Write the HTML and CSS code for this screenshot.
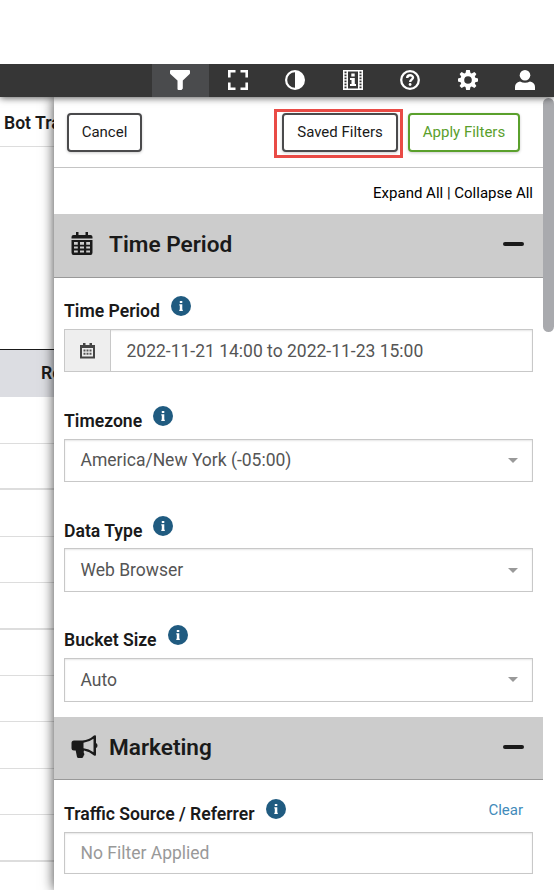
FILE: index.html
```html
<!DOCTYPE html>
<html lang="en">
<head>
    <meta charset="UTF-8">
    <meta name="viewport" content="width=device-width, initial-scale=1.0">
    <title>Filters</title>
    <link rel="stylesheet" href="styles.css">
</head>
<body>
    <nav class="topbar">
        <a class="topbar-item active">
            <svg width="20" height="20" viewBox="0 0 20 20"><path fill="#fff" d="M1 0h18q1 0 1 1v2q0 .7-.6 1.2L12.800 10.500V18.500L11.500 20H8.500Q7.500 20 7.500 19V10.500L.6 4.200Q0 3.700 0 3V1q0-1 1-1z"/></svg>
        </a>
        <a class="topbar-item">
            <svg width="20" height="20" viewBox="0 0 20 20"><path fill="none" stroke="#fff" stroke-width="2.600" d="M1.300 7.500V1.300h6.200M12.500 1.300h6.200v6.200M18.700 12.500v6.200h-6.200M7.500 18.700H1.300v-6.200"/></svg>
        </a>
        <a class="topbar-item">
            <svg width="20" height="20" viewBox="0 0 20 20"><circle cx="10" cy="10" r="8.900" fill="none" stroke="#fff" stroke-width="2.200"/><path fill="#fff" d="M10 1a9 9 0 0 1 0 18z"/></svg>
        </a>
        <a class="topbar-item">
            <svg width="20" height="20" viewBox="0 0 20 20"><path fill="#fff" d="M0 0h20v20H0z"/><path fill="#363636" d="M5 1.500h10v17H5z"/><path stroke="#363636" stroke-width="2" stroke-dasharray="1.700 1.300" d="M2.500 1.500v17M17.500 1.500v17"/><path fill="#fff" d="M8.300 3.500h3.400v3H8.300zM7 8h4.800v6H13v2H7v-2h1.500v-4H7z"/></svg>
        </a>
        <a class="topbar-item">
            <svg width="20" height="20" viewBox="0 0 20 20"><circle cx="10" cy="10" r="8.800" fill="none" stroke="#fff" stroke-width="2.300"/><path fill="none" stroke="#fff" stroke-width="2.400" d="M7.200 8c0-3.800 5.800-3.400 5.800-.4 0 2-2.800 2.100-2.800 4.400"/><circle cx="10.100" cy="14.500" r="1.400" fill="#fff"/></svg>
        </a>
        <a class="topbar-item">
            <svg width="20" height="20" viewBox="0 0 20 20"><path fill="#fff" fill-rule="evenodd" d="M8.200 0h3.600l.7 3 1.200.5 2.700-1.600 2 2-1.600 2.700.5 1.200 2.700.7v3l-2.700.7-.5 1.200 1.600 2.700-2 2-2.700-1.600-1.200.5-.7 3H8.200l-.7-3-1.200-.5-2.700 1.600-2-2 1.600-2.700-.5-1.200L0 11.500v-3l2.700-.7.5-1.200-1.600-2.700 2-2 2.700 1.600 1.200-.5zM10 6.200a3.800 3.800 0 1 0 0 7.600 3.800 3.800 0 0 0 0-7.600z"/></svg>
        </a>
        <a class="topbar-item">
            <svg width="20" height="20" viewBox="0 0 20 20"><circle cx="10" cy="5.300" r="5.300" fill="#fff"/><path fill="#fff" d="M0 20v-3q0-4.500 5-5.600 5 2.600 10 0 5 1.100 5 5.600v3z"/></svg>
        </a>
    </nav>

    <div class="content">
        <!-- report behind the filter drawer -->
        <div class="report">
            <div class="report-title">Bot Traffic</div>
            <div class="report-space"></div>
            <div class="report-head">Report</div>
            <div class="report-row"></div>
            <div class="report-row thick"></div>
            <div class="report-row"></div>
            <div class="report-row"></div>
            <div class="report-row thick"></div>
            <div class="report-row"></div>
            <div class="report-row"></div>
            <div class="report-row"></div>
            <div class="report-row"></div>
            <div class="report-row thick"></div>
        </div>

        <div class="drawer">
            <div class="actions">
                <button class="btn">Cancel</button>
                <div class="highlight"><button class="btn btn-saved">Saved Filters</button></div>
                <button class="btn btn-apply">Apply Filters</button>
            </div>
            <div class="toggle-all"><a>Expand All</a> | <a>Collapse All</a></div>

            <div class="section-head">
                <svg class="section-icon" width="22" height="24" viewBox="0 0 22 24"><path fill="#1a1a1a" d="M5 0h2.500v3h7V0H17v3h2.500Q21.500 3 21.500 5v1.500H.5V5q0-2 2-2H5z"/><path fill="#1a1a1a" fill-rule="evenodd" d="M.5 8h21v12.500q0 2.500-2 2.500h-17q-2 0-2-2.500zm2.500 2v2.800h3.800V10zm6 0v2.800h4V10zm6.200 0v2.800H19V10zM3 14.500v2h3.800v-2zm6 0v2h4v-2zm6.200 0v2H19v-2zM3 18.500v2h3.800v-2zm6 0v2h4v-2zm6.200 0v2H19v-2z"/></svg>
                <span class="section-title">Time Period</span>
                <span class="minus"></span>
            </div>

            <div class="field">
                <div class="label"><span>Time Period</span><svg class="info" width="20" height="20" viewBox="0 0 20 20"><circle cx="10" cy="10" r="10" fill="#205b80"/><path fill="#fff" d="M8.800 5h2.500v2H8.800zM8.300 8.200h3v5.600h.5V15H8.300v-1.200h.5V9.400h-.5z"/></svg></div>
                <div class="input">
                    <span class="addon">
                        <svg width="15" height="16" viewBox="0 0 15 16"><path fill="#444" d="M3 0h2.500v2h4V0H12v2h3v13.500H0V2h3z"/><path fill="#eee" d="M2 5h11v8.500H2z"/><path stroke="#555" stroke-width="2" stroke-dasharray="2 1" d="M3.500 7.500h8M3.500 10.800h8"/></svg>
                    </span>
                    <span class="value">2022-11-21 14:00 to 2022-11-23 15:00</span>
                </div>
            </div>
            <div class="field">
                <div class="label"><span>Timezone</span><svg class="info" width="20" height="20" viewBox="0 0 20 20"><circle cx="10" cy="10" r="10" fill="#205b80"/><path fill="#fff" d="M8.800 5h2.500v2H8.800zM8.300 8.200h3v5.600h.5V15H8.300v-1.200h.5V9.400h-.5z"/></svg></div>
                <div class="input select"><span class="value">America/New York (-05:00)</span><span class="caret"></span></div>
            </div>
            <div class="field">
                <div class="label"><span>Data Type</span><svg class="info" width="20" height="20" viewBox="0 0 20 20"><circle cx="10" cy="10" r="10" fill="#205b80"/><path fill="#fff" d="M8.800 5h2.500v2H8.800zM8.300 8.200h3v5.600h.5V15H8.300v-1.200h.5V9.400h-.5z"/></svg></div>
                <div class="input select"><span class="value">Web Browser</span><span class="caret"></span></div>
            </div>
            <div class="field">
                <div class="label"><span>Bucket Size</span><svg class="info" width="20" height="20" viewBox="0 0 20 20"><circle cx="10" cy="10" r="10" fill="#205b80"/><path fill="#fff" d="M8.800 5h2.500v2H8.800zM8.300 8.200h3v5.600h.5V15H8.300v-1.200h.5V9.400h-.5z"/></svg></div>
                <div class="input select"><span class="value">Auto</span><span class="caret"></span></div>
            </div>

            <div class="section-head">
                <svg class="section-icon wide" width="27" height="23" viewBox="0 0 27 23"><path fill="#1a1a1a" fill-rule="evenodd" d="M3 5.500h8.500Q18 5 23 .5q2-1 2 1V8q1.500.5 1.500 2.500T25 13v6.500q0 2-2 1-4.500-4-10-4.900-.7 2 .3 3.200.3 1.500-1 2.200.5 1.500-1.500 2H7.500q-1.300 0-1.600-1.500L4.700 15.500H3Q.5 15.500.5 13V8Q.5 5.500 3 5.500zM12.500 7.800v5.500q5.500.6 10 4V3.800q-4.500 3.400-10 4z"/></svg>
                <span class="section-title">Marketing</span>
                <span class="minus"></span>
            </div>

            <div class="field">
                <div class="label"><span>Traffic Source / Referrer</span><svg class="info" width="20" height="20" viewBox="0 0 20 20"><circle cx="10" cy="10" r="10" fill="#205b80"/><path fill="#fff" d="M8.800 5h2.500v2H8.800zM8.300 8.200h3v5.600h.5V15H8.300v-1.200h.5V9.400h-.5z"/></svg><a class="clear">Clear</a></div>
                <div class="input text"><span class="value placeholder">No Filter Applied</span></div>
            </div>
        </div>

        <div class="scrollbar"><div class="thumb"></div></div>
    </div>
</body>
</html>
```
FILE: styles.css
```css
* {
    box-sizing: border-box;
}
body {
    margin: 0;
    padding-top: 64px;
    height: 890px;
    overflow: hidden;
    background: #fff;
    color: #1a1a1a;
    font-family: Roboto, "Liberation Sans", sans-serif;
}
.topbar {
    display: flex;
    justify-content: flex-end;
    height: 33px;
    background: #363636;
    position: relative;
    z-index: 2;
    box-shadow: 0 1px 7px rgba(0, 0, 0, 0.65);
    clip-path: inset(0 0 -12px 0);
}
.topbar-item {
    display: flex;
    justify-content: center;
    width: 57.5px;
    padding-top: 6px;
}
.topbar-item.active {
    background: #4a4b4d;
}
.content {
    display: flex;
    height: 793px;
    overflow: hidden;
}
.report {
    width: 54px;
    flex: none;
    overflow: hidden;
    white-space: nowrap;
    font-weight: 600;
}
.report-title {
    height: 50px;
    padding-left: 4px;
    font-size: 17.6px;
    line-height: 52px;
    border-bottom: 1px solid #ddd;
}
.report-space {
    height: 202px;
}
.report-head {
    height: 48px;
    margin-bottom: 0.6px;
    padding-left: 41px;
    font-size: 17.6px;
    line-height: 46px;
    background: #dcdde2;
    border-top: 1px solid #1a1a1a;
}
.report-row {
    height: 46.4px;
    border-bottom: 1px solid #ddd;
}
.report-row.thick {
    border-bottom-width: 2px;
}
.drawer {
    width: 489px;
    flex: none;
    background: #fff;
    position: relative;
    z-index: 1;
    box-shadow: 0 0 12px rgba(0, 0, 0, 0.75);
}
.actions {
    display: flex;
    align-items: flex-start;
    height: 71px;
    padding: 16px 23px 0 13px;
    border-bottom: 1px solid #c4c4c4;
}
.btn {
    width: 75px;
    height: 39px;
    padding: 0 0 1px;
    border: 2px solid #4a4a4c;
    border-radius: 4px;
    background: #fff;
    color: #1a1a1a;
    font-family: inherit;
    font-size: 15px;
    box-shadow: 0 1px 3px rgba(0, 0, 0, 0.2);
}
.highlight {
    width: 129px;
    height: 49px;
    margin: -4px 5px 0 auto;
    padding: 1px 2px 0 5px;
    border: 3px solid #e94b46;
}
.btn-saved {
    width: 116px;
}
.btn-apply {
    width: 112px;
    border-color: #5aa02c;
    color: #5aa02c;
}
.toggle-all {
    height: 46px;
    padding-right: 10px;
    font-size: 15px;
    line-height: 50px;
    text-align: right;
    color: #000;
}
.section-head {
    display: flex;
    align-items: center;
    height: 63.7px;
    padding: 0 19px 3px 17px;
    background: #ccc;
    border-bottom: 1px solid #999;
}
.section-icon {
    margin-right: 16px;
}
.section-icon.wide {
    margin-right: 11px;
}
.section-title {
    padding-top: 1px;
    font-size: 22.6px;
    font-weight: 600;
}
.minus {
    width: 21px;
    height: 4px;
    margin-left: auto;
    border-radius: 2px;
    background: #1a1a1a;
}
.field {
    height: 109.75px;
    padding: 0 10px;
}
.label {
    display: flex;
    height: 51.2px;
    padding-top: 18.4px;
    font-size: 17.6px;
    font-weight: 600;
    line-height: 30.4px;
}
.info {
    margin-left: 11px;
}
.input {
    display: flex;
    align-items: center;
    height: 43.4px;
    border: 1px solid #c8c8c8;
    box-shadow: inset 0 1px 2px rgba(0, 0, 0, 0.1);
    color: #555;
    font-size: 17.5px;
}
.input.text {
    height: 42.4px;
}
.addon {
    display: flex;
    align-items: center;
    justify-content: center;
    width: 46px;
    height: 100%;
    background: #eee;
    border-right: 1px solid #c8c8c8;
}
.value {
    padding-left: 15.5px;
}
.placeholder {
    color: #999;
}
.caret {
    margin: 0 14px 0 auto;
    border: 5px solid transparent;
    border-top-color: #999;
    border-bottom: 0;
}
.clear {
    margin: -4px 10px 0 auto;
    color: #428bba;
    font-size: 15px;
    font-weight: 400;
}
.scrollbar {
    width: 11px;
    padding-top: 1px;
    background: #fff;
    position: relative;
    z-index: 1;
}
.thumb {
    height: 234px;
    border-radius: 6px;
    background: #a9aaae;
}
```
